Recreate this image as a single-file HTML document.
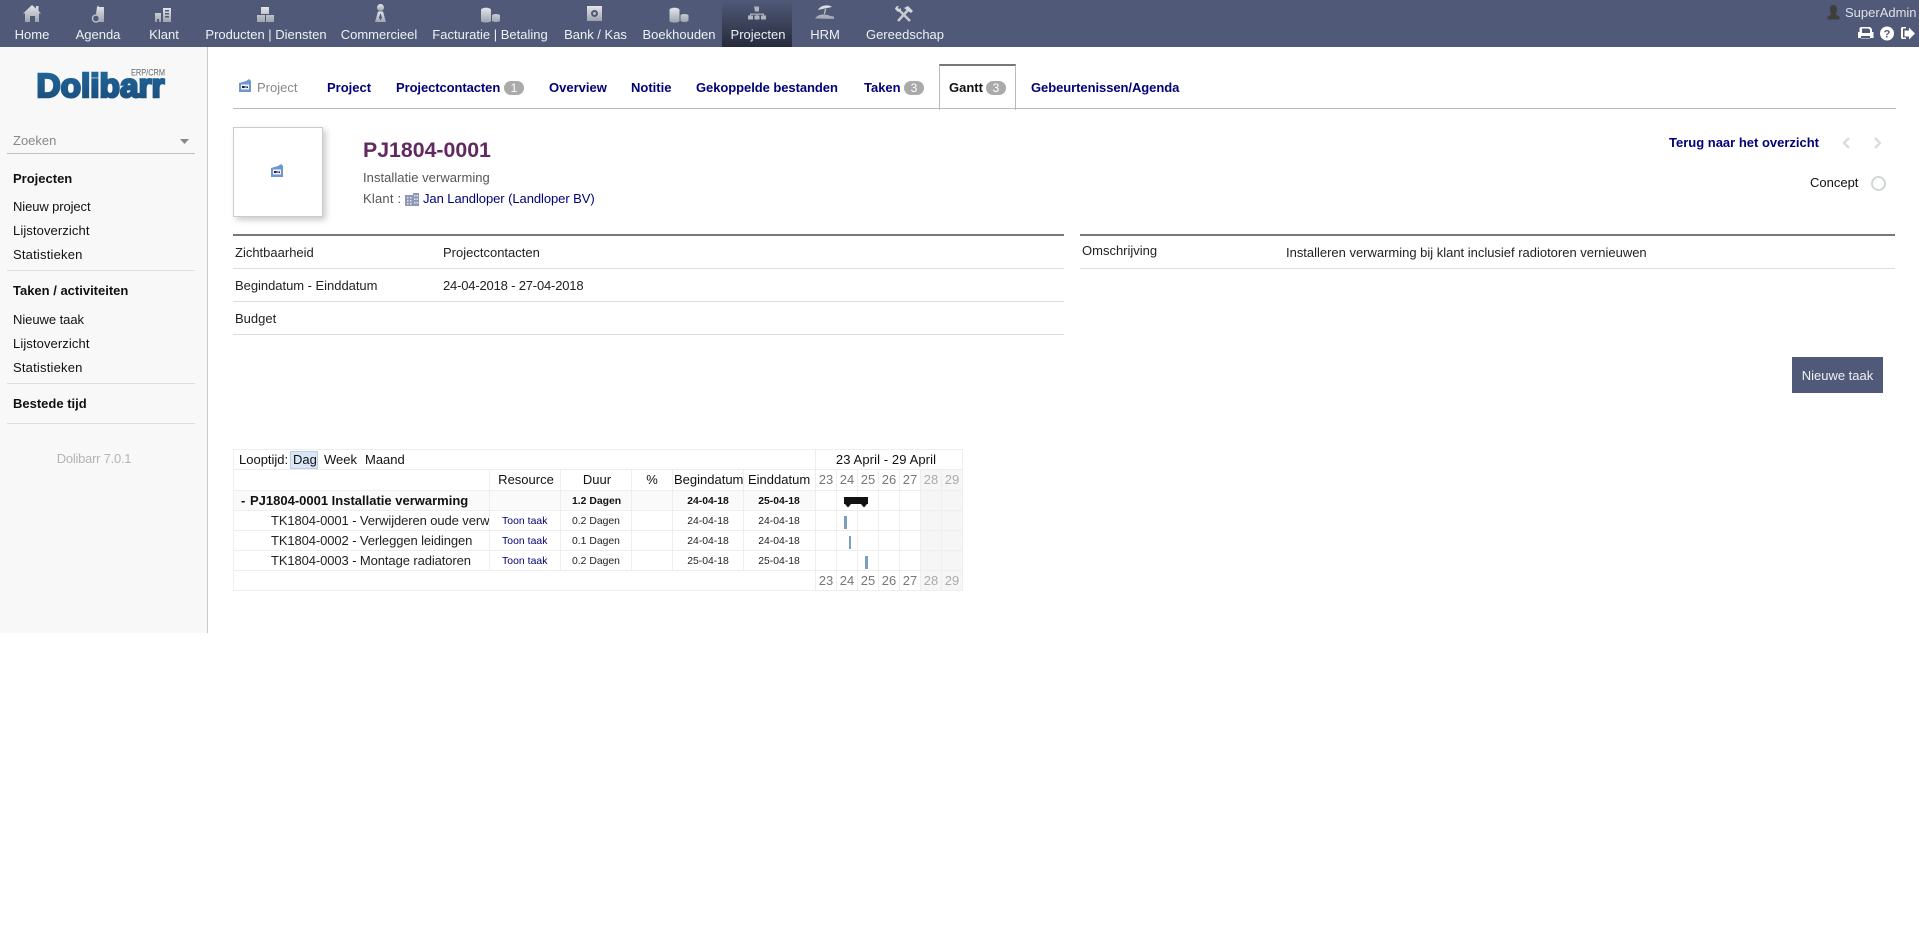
<!DOCTYPE html>
<html lang="nl">
<head>
<meta charset="utf-8">
<title>Dolibarr - Gantt</title>
<style>
html,body{margin:0;padding:0;width:1919px;height:927px;overflow:hidden;background:#fff}
body{position:relative;font-family:"Liberation Sans",sans-serif;font-size:13px;color:#222}
.a,.t,.c,.n,.b{position:absolute}
.t,.c,.n{line-height:16px;white-space:nowrap}
.c{transform:translateX(-50%)}
a,.n{color:#000078;text-decoration:none}
.n{font-weight:bold}
.m{color:#eef0f5}
.s{color:#777}
.w{color:#aaa}
.bd{background:#aaa;color:#fff;border-radius:7px;width:20px;height:14px;text-align:center;line-height:14px;font-size:12px;position:absolute;top:81px}
.h{position:absolute;height:1px;background:#ddd}
.gh{position:absolute;height:1px;background:#eee}
.gv{position:absolute;width:1px;background:#eee}
.sm{font-size:10.4px}
a.sm{letter-spacing:.05px}
</style>
</head>
<body>
<!-- Top bar -->
<div class="a" style="left:0;top:0;width:1919px;height:47px;background:#505a78"></div>
<div class="a" style="left:722px;top:0;width:70px;height:47px;background:linear-gradient(#505a78,#262b3c)"></div>
<svg class="a" style="left:0;top:0" width="1919" height="47" viewBox="0 0 1919 47">
<defs><linearGradient id="ig" x1="0" y1="0" x2="0" y2="1"><stop offset="0" stop-color="#e4e6ea"/><stop offset="1" stop-color="#9ea3ae"/></linearGradient></defs>
<g fill="url(#ig)">
<!-- home -->
<path d="M32 5l4 3.500V6h2.500v4.700L41 13.500h-2V22H35v-6h-5v6h-5v-8.500h-2z"/>
<!-- agenda -->
<path d="M97 7l1-1.500 1 1.500h5v15h-5v-3a4.500 4.500 0 0 0-3-5z"/><circle cx="96" cy="18.500" r="3.500" fill="none" stroke="#b8bcc6" stroke-width="1.500"/>
<!-- klant -->
<path d="M155 13h6v9h-2v-3h-2v3h-2zM163 8h8v14h-8zM165 10v1.500h4V10zM165 13v1.500h4V13zM165 16v1.500h4V16z" fill-rule="evenodd"/>
<!-- producten -->
<path d="M261 7h8v7h-8zM257 15h8v7h-8zM266 15h8v7h-8z"/>
<!-- commercieel -->
<circle cx="380.500" cy="7.500" r="3.500"/><path d="M378 11.500h5l3 10.500h-11zM380.500 13l-1.500 4.500 1.500 3 1.500-3z" fill-rule="evenodd"/>
<!-- facturatie -->
<path d="M481 10c0-3 10-3 10 0v11c0 2-10 2-10 0zM492 15.500c0-2 8-2 8 0v5c0 2-8 2-8 0z"/>
<!-- bank -->
<path d="M587 6h15v15h-15zM594.500 10a3.500 3.500 0 1 0 .01 0zM594.500 12a1.500 1.500 0 1 1-.01 0z" fill-rule="evenodd"/>
<!-- boekhouden -->
<path d="M669.500 10c0-3 10-3 10 0v11c0 2-10 2-10 0zM680.500 15.500c0-2 8-2 8 0v5c0 2-8 2-8 0z"/>
<!-- projecten -->
<path d="M754 6.500h5v5h-2v2h7v2h2v4h-5v-4h2v-.800h-5.500v.800h2v4h-5v-4h2v-.800h-5.500v.800h2v4h-5v-4h2v-2h7v-2h-2z" fill="#b0b4be"/>
<!-- hrm -->
<path d="M818 10c2-5 11-6 14-3zM825 9l-1.500 6 1.200.3 1.500-6zM815 18.500c2-3 5-4 9-4 4 0 6 2 10 2v2.500z"/>
</g>
<!-- superadmin -->
<path d="M1833.500 5c3 0 3.500 2 3.500 4.500 0 2.500-1 3.500-1 5 .5 1 3 1 3.500 2.500v2.500h-12V17c.5-1.500 3-1.500 3.500-2.500 0-1.500-1-2.500-1-5 0-2.500.5-4.500 3.500-4.500z" fill="#3d3f3d"/>
<!-- gereedschap -->
<g stroke="#c8cbd2" stroke-width="2.500" fill="none"><path d="M898 9l12 12M909 9L898 21"/></g>
<g fill="#d4d7dc"><path d="M904 8l4-2 5 5-2 2-3-2zM895 9a3.500 3.500 0 0 1 4-3l-1.500 2 1.500 1.500 2-1.500a3.500 3.500 0 0 1-3 4z"/></g>
<!-- printer -->
<g fill="#fff"><path d="M1861 27h9l2 2v3h1.500v6h-15.500v-6h1.500V28zM1862 28.500V33h8v-3.200l-1.500-1.300zM1861 36v2.500h9V36z" fill-rule="evenodd"/>
<!-- help -->
<circle cx="1887" cy="33.500" r="7"/>
<!-- logout -->
<path d="M1906 27h-3.500c-1 0-1.500.600-1.500 1.500v9c0 1 .500 1.500 1.500 1.500h3.500v-1.500h-3v-9h3zM1909 27.500v3h-4.500v6h4.500v3l6-6z"/></g>
<text x="1887" y="37.700" text-anchor="middle" font-family="Liberation Sans" font-weight="bold" font-size="11" fill="#505a78">?</text>
</svg>
<span class="c m" style="left:32px;top:27px">Home</span>
<span class="c m" style="left:98px;top:27px">Agenda</span>
<span class="c m" style="left:164px;top:27px">Klant</span>
<span class="c m" style="left:266px;top:27px">Producten | Diensten</span>
<span class="c m" style="left:379px;top:27px">Commercieel</span>
<span class="c m" style="left:490px;top:27px">Facturatie | Betaling</span>
<span class="c m" style="left:595.500px;top:27px">Bank / Kas</span>
<span class="c m" style="left:679px;top:27px">Boekhouden</span>
<span class="c m" style="left:758px;top:27px">Projecten</span>
<span class="c m" style="left:825px;top:27px">HRM</span>
<span class="c m" style="left:905px;top:27px">Gereedschap</span>
<span class="t" style="left:1845px;top:5px;color:#dfe2ea">SuperAdmin</span>

<!-- Sidebar -->
<div class="a" style="left:0;top:47px;width:207px;height:586px;background:#f8f8f8;border-right:1px solid #c8c8c8"></div>
<svg class="a" style="left:30px;top:62px" width="145" height="42" viewBox="30 62 145 42">
<defs><linearGradient id="lg" x1="0" y1="0" x2="0" y2="1"><stop offset="0" stop-color="#20699c"/><stop offset="1" stop-color="#1b4c7b"/></linearGradient></defs>
<text x="36.500" y="97" font-family="Liberation Sans" font-weight="bold" font-size="33" textLength="128" lengthAdjust="spacingAndGlyphs" fill="url(#lg)" stroke="url(#lg)" stroke-width="2.400">Dolibarr</text>
<text x="131" y="75.500" font-family="Liberation Sans" font-size="9" textLength="34" lengthAdjust="spacingAndGlyphs" fill="#666">ERP/CRM</text>
</svg>
<span class="t" style="left:13px;top:133px;color:#888">Zoeken</span>
<svg class="a" style="left:180px;top:139px" width="9" height="5"><path d="M0 0h9l-4.500 5z" fill="#888"/></svg>
<div class="h" style="left:7px;top:153px;width:188px;background:#c0c0c0"></div>
<span class="t" style="left:13px;top:171px;font-weight:bold;color:#111">Projecten</span>
<span class="t" style="left:13px;top:199px;color:#111;letter-spacing:-.1px">Nieuw project</span>
<span class="t" style="left:13px;top:223px;color:#111;letter-spacing:.1px">Lijstoverzicht</span>
<span class="t" style="left:13px;top:247px;color:#111;letter-spacing:.2px">Statistieken</span>
<div class="h" style="left:7px;top:270px;width:188px"></div>
<span class="t" style="left:13px;top:283px;font-weight:bold;color:#111">Taken / activiteiten</span>
<span class="t" style="left:13px;top:312px;color:#111;letter-spacing:-.05px">Nieuwe taak</span>
<span class="t" style="left:13px;top:336px;color:#111;letter-spacing:.1px">Lijstoverzicht</span>
<span class="t" style="left:13px;top:360px;color:#111;letter-spacing:.2px">Statistieken</span>
<div class="h" style="left:7px;top:383px;width:188px"></div>
<span class="t" style="left:13px;top:396px;font-weight:bold;color:#111">Bestede tijd</span>
<div class="h" style="left:7px;top:423px;width:188px"></div>
<span class="c" style="left:94px;top:451px;color:#b4b4b4;letter-spacing:-.25px">Dolibarr 7.0.1</span>

<!-- Tabs -->
<svg class="a" style="left:239px;top:79px" width="13" height="14" viewBox="0 0 13 14"><path d="M0 4l7-2 3-2 2 2v11H0z" fill="#6d97d2"/><path d="M2 5.500h8v5H2z" fill="#f0f4fa"/><path d="M3 7h2.500v2H3zM5.500 7.500H9V9H8v-.5H5.500z" fill="#223"/></svg>
<span class="t" style="left:257px;top:80px;color:#888">Project</span>
<span class="n" style="left:327px;top:80px;line-height:16px">Project</span>
<span class="n" style="left:396px;top:80px;line-height:16px;letter-spacing:-.08px">Projectcontacten</span><span class="bd" style="left:504px">1</span>
<span class="n" style="left:549px;top:80px;line-height:16px">Overview</span>
<span class="n" style="left:631px;top:80px;line-height:16px">Notitie</span>
<span class="n" style="left:696px;top:80px;line-height:16px;letter-spacing:-.06px">Gekoppelde bestanden</span>
<span class="n" style="left:864px;top:80px;line-height:16px">Taken</span><span class="bd" style="left:904px">3</span>
<div class="a" style="left:939px;top:64px;width:75px;height:44px;background:#fff;border:1px solid #bbb;border-top:2px solid #777;border-bottom:0"></div>
<div class="h" style="left:233px;top:108px;width:1663px;background:#bbb"></div>
<span class="t" style="left:949px;top:80px;font-weight:bold;color:#111">Gantt</span><span class="bd" style="left:986px">3</span>
<span class="n" style="left:1031px;top:80px;line-height:16px;letter-spacing:-.06px">Gebeurtenissen/Agenda</span>

<!-- Banner -->
<div class="a" style="left:233px;top:127px;width:88px;height:88px;border:1px solid #ccc;background:#fff;box-shadow:3px 3px 6px #ccc"></div>
<svg class="a" style="left:271px;top:164px" width="13" height="14" viewBox="0 0 13 14"><path d="M0 4l7-2 3-2 2 2v11H0z" fill="#6d97d2"/><path d="M2 5.500h8v5H2z" fill="#f0f4fa"/><path d="M3 7h2.500v2H3zM5.500 7.500H9V9H8v-.5H5.500z" fill="#223"/></svg>
<span class="a" style="left:363px;top:138px;font-size:21.300px;line-height:25px;font-weight:bold;color:#622860;white-space:nowrap">PJ1804-0001</span>
<span class="t" style="left:363px;top:170px;color:#555;letter-spacing:.05px">Installatie verwarming</span>
<span class="t" style="left:363px;top:191px;color:#555;letter-spacing:.2px">Klant :</span>
<svg class="a" style="left:405px;top:192px" width="14" height="14" viewBox="0 0 14 14"><path d="M0 3h8V1h6v13H0z" fill="#8e97b8"/><path d="M2 5h1.500v1.500H2zM5 5h1.500v1.500H5zM9 3h1.500v1.500H9zM11.500 3H13v1.500h-1.500zM2 8h1.500v1.500H2zM5 8h1.500v1.500H5zM9 6.500h1.500V8H9zM11.500 6.500H13V8h-1.500zM9 10h1.500v1.500H9zM11.500 10H13v1.500h-1.500zM2 11h1.500v1.500H2zM5 11h1.500v1.500H5z" fill="#e0e4ee"/></svg>
<a class="t" style="left:423px;top:191px;letter-spacing:-.065px">Jan Landloper (Landloper BV)</a>
<span class="n" style="left:1669px;top:135px;line-height:16px">Terug naar het overzicht</span>
<svg class="a" style="left:1842px;top:137px" width="40" height="12" viewBox="0 0 40 12"><path d="M7 1L2 6l5 5M33 1l5 5-5 5" fill="none" stroke="#dcdcdc" stroke-width="2.400"/></svg>
<span class="t" style="left:1810px;top:175px;color:#111">Concept</span>
<div class="a" style="left:1871px;top:176px;width:11px;height:11px;border:2px solid #d0d6d6;border-radius:50%"></div>

<!-- Left info table -->
<div class="a" style="left:233px;top:234px;width:831px;height:2px;background:#777"></div>
<span class="t" style="left:235px;top:245px">Zichtbaarheid</span>
<span class="t" style="left:443px;top:245px">Projectcontacten</span>
<div class="h" style="left:233px;top:268px;width:831px"></div>
<span class="t" style="left:235px;top:278px;letter-spacing:-.03px">Begindatum - Einddatum</span>
<span class="t" style="left:443px;top:278px;letter-spacing:-.18px">24-04-2018 - 27-04-2018</span>
<div class="h" style="left:233px;top:301px;width:831px"></div>
<span class="t" style="left:235px;top:311px">Budget</span>
<div class="h" style="left:233px;top:334px;width:831px"></div>

<!-- Right info table -->
<div class="a" style="left:1080px;top:234px;width:815px;height:2px;background:#777"></div>
<span class="t" style="left:1082px;top:243px">Omschrijving</span>
<span class="t" style="left:1286px;top:245px;letter-spacing:-.01px">Installeren verwarming bij klant inclusief radiotoren vernieuwen</span>
<div class="h" style="left:1080px;top:268px;width:815px"></div>
<div class="a" style="left:1792px;top:357px;width:91px;height:36px;background:#505a78;color:#eef0f5;text-align:center;line-height:38px">Nieuwe taak</div>

<!-- Gantt backgrounds -->
<div class="a" style="left:233px;top:490px;width:582px;height:20px;background:#fafafa"></div>
<div class="a" style="left:921px;top:470px;width:41px;height:120px;background:#f6f6f6"></div>
<!-- Gantt grid -->
<div class="gh" style="left:233px;top:449px;width:730px"></div>
<div class="gh" style="left:233px;top:469px;width:730px"></div>
<div class="gh" style="left:233px;top:490px;width:730px"></div>
<div class="gh" style="left:233px;top:510px;width:730px"></div>
<div class="gh" style="left:233px;top:530px;width:730px"></div>
<div class="gh" style="left:233px;top:550px;width:730px"></div>
<div class="gh" style="left:233px;top:570px;width:730px"></div>
<div class="gh" style="left:233px;top:590px;width:730px"></div>
<div class="gv" style="left:233px;top:449px;height:141px"></div>
<div class="gv" style="left:489px;top:470px;height:100px"></div>
<div class="gv" style="left:560px;top:470px;height:100px"></div>
<div class="gv" style="left:631px;top:470px;height:100px"></div>
<div class="gv" style="left:672px;top:470px;height:100px"></div>
<div class="gv" style="left:743px;top:470px;height:100px"></div>
<div class="gv" style="left:815px;top:449px;height:141px"></div>
<div class="gv" style="left:836px;top:470px;height:120px"></div>
<div class="gv" style="left:857px;top:470px;height:120px"></div>
<div class="gv" style="left:878px;top:470px;height:120px"></div>
<div class="gv" style="left:899px;top:470px;height:120px"></div>
<div class="gv" style="left:920px;top:470px;height:120px"></div>
<div class="gv" style="left:941px;top:470px;height:120px"></div>
<div class="gv" style="left:962px;top:449px;height:141px"></div>

<!-- Gantt text -->
<span class="t" style="left:239px;top:452px;color:#111">Looptijd:</span>
<div class="a" style="left:290px;top:451px;width:26px;height:16px;background:#d8e6f6;border:1px solid #bccde4"></div>
<span class="t" style="left:293px;top:452px;color:#111">Dag</span>
<span class="t" style="left:324px;top:452px;color:#111">Week</span>
<span class="t" style="left:365px;top:452px;color:#111">Maand</span>
<span class="c" style="left:886px;top:452px;color:#111;letter-spacing:.1px">23 April - 29 April</span>
<span class="c" style="left:526px;top:472px;color:#111">Resource</span>
<span class="c" style="left:597px;top:472px;color:#111">Duur</span>
<span class="c" style="left:652px;top:472px;color:#111">%</span>
<span class="t" style="left:674px;top:472px;color:#111">Begindatum</span>
<span class="t" style="left:748px;top:472px;color:#111">Einddatum</span>
<span class="c s" style="left:826px;top:472px">23</span><span class="c s" style="left:847px;top:472px">24</span><span class="c s" style="left:868px;top:472px">25</span><span class="c s" style="left:889px;top:472px">26</span><span class="c s" style="left:910px;top:472px">27</span><span class="c w" style="left:931px;top:472px">28</span><span class="c w" style="left:952px;top:472px">29</span>
<span class="c s" style="left:826px;top:573px">23</span><span class="c s" style="left:847px;top:573px">24</span><span class="c s" style="left:868px;top:573px">25</span><span class="c s" style="left:889px;top:573px">26</span><span class="c s" style="left:910px;top:573px">27</span><span class="c w" style="left:931px;top:573px">28</span><span class="c w" style="left:952px;top:573px">29</span>

<span class="t" style="left:241px;top:493px;font-weight:bold;color:#111">-</span>
<span class="t" style="left:250px;top:493px;font-weight:bold;color:#111">PJ1804-0001 Installatie verwarming</span>
<span class="t sm" style="left:572px;top:494px;font-weight:bold;color:#111">1.2 Dagen</span>
<span class="c sm" style="left:708px;top:494px;font-weight:bold;color:#111">24-04-18</span>
<span class="c sm" style="left:779px;top:494px;font-weight:bold;color:#111">25-04-18</span>

<div class="t" style="left:271px;top:513px;width:218px;overflow:hidden;letter-spacing:-.1px">TK1804-0001 - Verwijderen oude verwarming</div>
<a class="t sm" style="left:502px;top:514px">Toon taak</a>
<span class="t sm" style="left:572px;top:514px">0.2 Dagen</span>
<span class="c sm" style="left:708px;top:514px">24-04-18</span>
<span class="c sm" style="left:779px;top:514px">24-04-18</span>

<div class="t" style="left:271px;top:533px;width:218px;overflow:hidden;letter-spacing:-.1px">TK1804-0002 - Verleggen leidingen</div>
<a class="t sm" style="left:502px;top:534px">Toon taak</a>
<span class="t sm" style="left:572px;top:534px">0.1 Dagen</span>
<span class="c sm" style="left:708px;top:534px">24-04-18</span>
<span class="c sm" style="left:779px;top:534px">24-04-18</span>

<div class="t" style="left:271px;top:553px;width:218px;overflow:hidden;letter-spacing:-.1px">TK1804-0003 - Montage radiatoren</div>
<a class="t sm" style="left:502px;top:554px">Toon taak</a>
<span class="t sm" style="left:572px;top:554px">0.2 Dagen</span>
<span class="c sm" style="left:708px;top:554px">25-04-18</span>
<span class="c sm" style="left:779px;top:554px">25-04-18</span>

<!-- Gantt bars -->
<svg class="a" style="left:844px;top:497px" width="24" height="11" viewBox="0 0 24 11"><path d="M0 0h24v7h-1l-3 3.500L17 7H7l-3 3.500L1 7H0z" fill="#111"/></svg>
<div class="a" style="left:844px;top:516px;width:3px;height:13px;background:#7a9fc0"></div>
<div class="a" style="left:849px;top:536px;width:2px;height:13px;background:#7a9fc0"></div>
<div class="a" style="left:865px;top:556px;width:3px;height:13px;background:#7a9fc0"></div>
</body>
</html>
